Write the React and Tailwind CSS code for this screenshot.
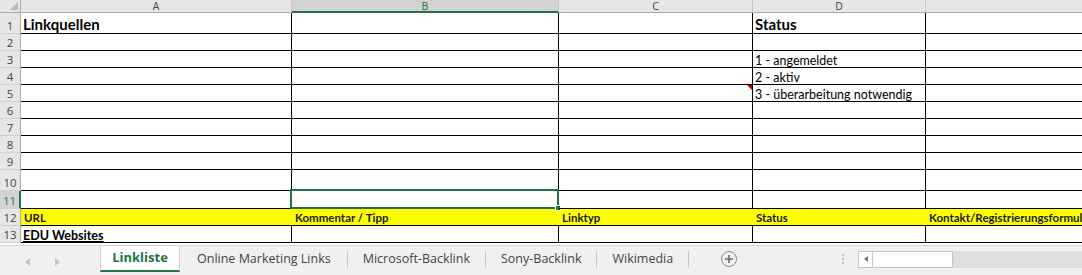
import React from 'react';

const cols = ['A', 'B', 'C', 'D', 'E'];
const rowHeights = ['h-[21px]', 'h-[17px]', 'h-[17px]', 'h-[17px]', 'h-[17px]', 'h-[17px]', 'h-[17px]', 'h-[17px]', 'h-[17px]', 'h-[21px]', 'h-[18px]', 'h-[17px]', 'h-[17px]'];

const data = {
  1: { A: <span className="text-[15px] leading-[18px] font-bold">Linkquellen</span>, D: <span className="text-[15px] leading-[18px] font-bold">Status</span> },
  3: { D: '1 - angemeldet' },
  4: { D: '2 - aktiv' },
  5: { D: '3 - überarbeitung notwendig' },
  13: { A: <span className="font-bold underline">EDU Websites</span> },
};

const headerRow = ['URL', 'Kommentar / Tipp', 'Linktyp', 'Status', 'Kontakt/Registrierungsformular'];

const Sheet = () => {
  return (
    <div className="grid grid-cols-[21px_271px_267px_194px_173px_500px] w-[1426px]">
      {/* column headers */}
      <div className="h-[13px] bg-[#e6e6e6] border-r border-b border-[#ababab] relative">
        <div className="absolute right-[2px] bottom-[2px] w-0 h-0 border-l-[8px] border-l-transparent border-b-[8px] border-b-[#b8b8b8]"></div>
      </div>
      {cols.map((c) =>
        c === 'B' ? (
          <div key={c} className="h-[13px] bg-[#d2d2d2] border-r border-[#c6c6c6] border-b-2 border-b-[#217346] flex items-start justify-center text-[10.5px] leading-[12px] text-[#217346] font-['Open_Sans',sans-serif]">
            {c}
          </div>
        ) : (
          <div key={c} className={`h-[13px] bg-[#e6e6e6] ${c === 'E' ? '' : 'border-r border-[#c6c6c6]'} border-b border-b-[#ababab] flex items-start justify-center text-[10.5px] leading-[12px] text-[#444] font-['Open_Sans',sans-serif]`}>
            {c}
          </div>
        )
      )}

      {rowHeights.map((h, i) => {
        const r = i + 1;
        const sel = r === 11;
        return (
          <React.Fragment key={r}>
            {sel ? (
              <div className={`${h} bg-[#d2d2d2] border-b border-[#d0d0d0] border-r-2 border-r-[#217346] flex items-end justify-center text-[11.5px] leading-[15px] text-[#217346] font-['Open_Sans',sans-serif]`}>
                {r}
              </div>
            ) : (
              <div className={`${h} bg-[#e6e6e6] border-b border-[#d0d0d0] border-r border-r-[#ababab] flex items-end justify-center text-[11.5px] leading-[15px] text-[#444] font-['Open_Sans',sans-serif]`}>
                {r}
              </div>
            )}
            {r === 12
              ? headerRow.map((t, j) => (
                  <div key={j} className={`${h} bg-[#ffff00] border-b border-black flex items-end pl-[3px] text-[11.5px] leading-[15px] font-bold text-[#1a1a1a] whitespace-nowrap overflow-hidden`}>
                    {t}
                  </div>
                ))
              : cols.map((c) => {
                  const v = data[r] && data[r][c];
                  return (
                    <div key={c} className={`${h} relative border-b border-black ${c === 'E' ? '' : 'border-r border-r-black'} flex items-end pl-[2px] text-[12.5px] leading-[13px] text-black whitespace-nowrap`}>
                      {v}
                      {r === 5 && c === 'C' && (
                        <div className="absolute right-0 top-0 w-0 h-0 border-l-[5px] border-l-transparent border-t-[5px] border-t-[#c00000]"></div>
                      )}
                      {sel && c === 'B' && (
                        <div className="absolute -left-[2px] -top-[2px] -right-[1px] -bottom-[1px] border-2 border-[#217346]">
                          <div className="absolute -right-[4px] -bottom-[4px] w-[6px] h-[6px] bg-[#217346] border border-white"></div>
                        </div>
                      )}
                    </div>
                  );
                })}
          </React.Fragment>
        );
      })}
    </div>
  );
};

const Sep = () => <div className="w-px h-[17px] bg-[#c6c6c6] shrink-0"></div>;

const TabBar = () => {
  return (
    <div className="h-[32px] mt-[2px] bg-[#f0f0f0] border-t border-[#d4d4d4] flex items-stretch font-['Open_Sans',sans-serif] text-[12.5px] text-[#444] whitespace-nowrap">
      <div className="w-[100px] shrink-0 flex items-center pl-[25px] gap-[23px] text-[#c3c3c3]">
        <svg width="6" height="8" viewBox="0 0 6 8"><path d="M5 0 L0 4 L5 8 Z" fill="currentColor" /></svg>
        <svg width="6" height="8" viewBox="0 0 6 8"><path d="M1 0 L6 4 L1 8 Z" fill="currentColor" /></svg>
      </div>
      <div className="w-[80px] shrink-0 h-[26px] bg-white border-l border-r border-[#d4d4d4] border-b-2 border-b-[#217346] flex items-center justify-center font-bold text-[#217346] text-[13px]">
        Linkliste
      </div>
      <div className="flex items-center h-[26px]">
        <div className="pl-[17px] pr-[16px]">Online Marketing Links</div>
        <Sep />
        <div className="px-[15px]">Microsoft-Backlink</div>
        <Sep />
        <div className="px-[15px]">Sony-Backlink</div>
        <Sep />
        <div className="px-[15px]">Wikimedia</div>
        <Sep />
        <div className="ml-[32px] shrink-0 w-[16px] h-[16px] rounded-full border border-[#8a8a8a] flex items-center justify-center text-[#6a6a6a]">
          <svg width="10" height="10" viewBox="0 0 10 10"><path d="M5 1 V9 M1 5 H9" stroke="currentColor" strokeWidth="1.6" /></svg>
        </div>
        <div className="ml-[105px] flex flex-col gap-[2px]">
          <div className="w-[2px] h-[2px] bg-[#c0c0c0]"></div>
          <div className="w-[2px] h-[2px] bg-[#c0c0c0]"></div>
          <div className="w-[2px] h-[2px] bg-[#c0c0c0]"></div>
        </div>
        <div className="ml-[14px] flex items-center h-[17px]">
          <div className="w-[95px] h-[17px] bg-white border border-[#c6c6c6] flex items-center">
            <div className="w-[14px] h-full flex items-center justify-center border-r border-[#c6c6c6] text-[#777]">
              <svg width="4" height="6" viewBox="0 0 4 6"><path d="M4 0 L0 3 L4 6 Z" fill="currentColor" /></svg>
            </div>
          </div>
          <div className="w-[140px] h-[17px] bg-[#dedede]"></div>
        </div>
      </div>
    </div>
  );
};

export default function App() {
  return (
    <div className="w-[1082px] h-[275px] overflow-hidden bg-white font-['Lato',sans-serif]">
      <Sheet />
      <TabBar />
    </div>
  );
}
